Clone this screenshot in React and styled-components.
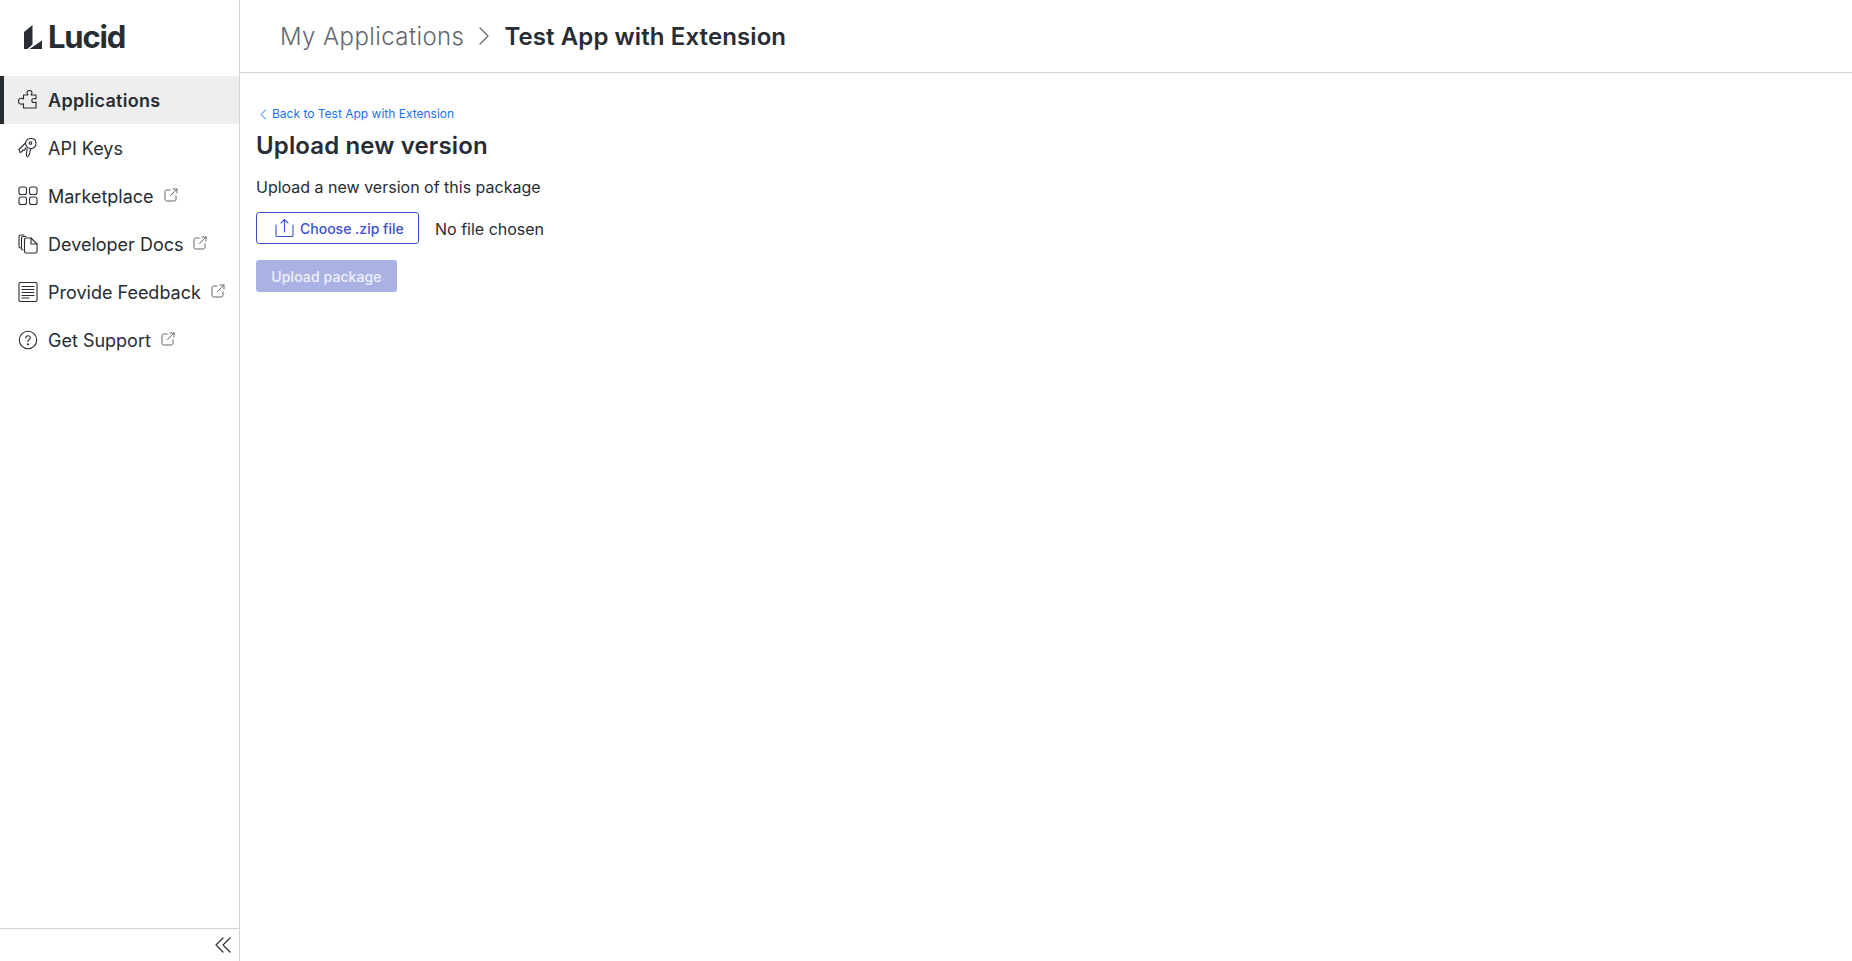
import styled, { createGlobalStyle } from 'styled-components';

const ink = '#282c33';

const GlobalStyle = createGlobalStyle`
  html, body {
    margin: 0;
    padding: 0;
    height: 100%;
    background: #fff;
    color: ${ink};
    font-family: Inter, "Noto Sans", sans-serif;
  }
  #root { height: 100%; }
  * { box-sizing: border-box; }
`;

const Glyph = ({ size = 20, children, ...rest }) => (
  <svg width={size} height={size} viewBox="0 0 20 20" fill="none" stroke="currentColor" strokeWidth="1.1" strokeLinecap="round" strokeLinejoin="round" {...rest}>
    {children}
  </svg>
);

const PuzzleIcon = () => (
  <Glyph>
    <path d="M5.5 5H9.500c.3 0 .4-.3.2-.6-.5-.5-.7-1-.7-1.600C9 1.400 10.200.5 11.500.5s2.500.9 2.500 2.300c0 .6-.2 1.100-.7 1.600-.2.3-.1.6.2.6H18v3.500c0 .3-.3.4-.6.3-.5-.2-1-.3-1.400-.3-1.300 0-2.200.8-2.200 2s.9 2 2.200 2c.4 0 .9-.1 1.400-.3.3-.1.6 0 .6.3V18H5.500v-4c0-.3-.3-.4-.6-.2-.5.3-1 .5-1.600.5C1.700 14.300.5 12.900.5 11.300S1.700 8.300 3.300 8.300c.6 0 1.100.2 1.600.5.3.2.6.1.6-.2z" />
  </Glyph>
);

const KeysIcon = () => (
  <Glyph>
    <path d="M7.500 5C8 2.500 10 .5 13 .5c3 0 5 2 5 5s-2 5-5 5c-2.500 0-5-2-5.500-5.500z" />
    <path d="M7.500 5 1 11.500l1.200 3 2-1 .5-1.500 1.800.3 1-2.300" />
    <path d="m13 10.500-1 2.500-.5 3.500-2 2.500-1.200-1.500.8-7.500" />
    <circle cx="12.500" cy="5" r="1.300" />
  </Glyph>
);

const GridIcon = () => (
  <Glyph>
    <rect x="1" y="1" width="7.500" height="7.500" rx="2" />
    <rect x="11.500" y="1" width="7.500" height="7.500" rx="2" />
    <rect x="1" y="11" width="7.500" height="7.500" rx="2" />
    <rect x="11.500" y="11" width="7.500" height="7.500" rx="2" />
  </Glyph>
);

const DocsIcon = () => (
  <Glyph>
    <path d="M2.500 14c-1 0-1.500-.5-1.500-1.500V2.500C1 1.500 1.500 1 2.500 1H6" />
    <path d="M5 16c-1 0-1.500-.5-1.500-1.500V4c0-1 .5-1.500 1.500-1.500h3" />
    <path d="M8 19c-1 0-1.500-.5-1.500-1.500v-12C6.500 4.500 7 4 8 4h5l6 6v7.500c0 1-.5 1.500-1.500 1.500z" />
    <path d="M13 4v6h6" />
  </Glyph>
);

const ListIcon = () => (
  <Glyph>
    <rect x="1" y=".5" width="18" height="19" rx="1.500" />
    <path d="M4 4.500h12M4 7.500h12M4 10.500h12M4 13.500h12M4 16h7" />
  </Glyph>
);

const HelpIcon = () => (
  <Glyph>
    <circle cx="10" cy="10" r="8.700" />
    <path d="M7.800 7.800c0-1.300 1-2.100 2.300-2.100s2.200.8 2.200 2c0 1.800-2.300 1.800-2.300 3.800" />
    <circle cx="10" cy="14.200" r=".5" fill="currentColor" />
  </Glyph>
);

const ExternalIcon = () => (
  <Glyph size={14} viewBox="0 0 14 14" strokeWidth="1" stroke="#62676e">
    <path d="M6 2H2.500C1.700 2 1 2.700 1 3.500v8C1 12.300 1.700 13 2.500 13h8c.8 0 1.500-.7 1.500-1.500V8" />
    <path d="M6.500 7.500 13 1M9 1h4v4" />
  </Glyph>
);

const navItems = [
  { label: 'Applications', Icon: PuzzleIcon, active: true },
  { label: 'API Keys', Icon: KeysIcon },
  { label: 'Marketplace', Icon: GridIcon, external: true },
  { label: 'Developer Docs', Icon: DocsIcon, external: true },
  { label: 'Provide Feedback', Icon: ListIcon, external: true },
  { label: 'Get Support', Icon: HelpIcon, external: true },
];

const App = () => {
  return (
    <Layout>
      <GlobalStyle />
      <Sidebar>
        <Logo>
          <svg width="18" height="24" viewBox="0 0 18 24" fill={ink}>
            <path d="M0 7 8.500 0v19.500L3.500 24H0z" />
            <path d="M18 15.500V24H5.500z" />
          </svg>
          <LogoText>Lucid</LogoText>
        </Logo>
        <Nav>
          {navItems.map(({ label, Icon, active, external }) => (
            <NavItem key={label} $active={active}>
              <NavIcon><Icon /></NavIcon>
              <span>{label}</span>
              {external && <ExternalMark><ExternalIcon /></ExternalMark>}
            </NavItem>
          ))}
        </Nav>
        <Collapse>
          <Glyph size={18} viewBox="0 0 18 18" strokeWidth="1.200">
            <path d="M9 2 2 9l7 7M16 2 9 9l7 7" />
          </Glyph>
        </Collapse>
      </Sidebar>
      <Main>
        <Header>
          <Crumb>My Applications</Crumb>
          <CrumbArrow>
            <Glyph size={24} viewBox="0 0 24 24" strokeWidth="1.200">
              <path d="m8 4 8 8-8 8" />
            </Glyph>
          </CrumbArrow>
          <CrumbCurrent>Test App with Extension</CrumbCurrent>
        </Header>
        <Content>
          <BackLink>
            <Glyph size={11} viewBox="0 0 11 11" strokeWidth="1">
              <path d="M7.500 1 3 5.500 7.500 10" />
            </Glyph>
            Back to Test App with Extension
          </BackLink>
          <Title>Upload new version</Title>
          <Description>Upload a new version of this package</Description>
          <FileRow>
            <ChooseButton>
              <Glyph>
                <path d="M1 7v10.500c0 .7.4 1 1 1h15c.6 0 1-.3 1-1V7" />
                <path d="M9.500 14V1.500M6 5l3.500-3.500L13 5" />
              </Glyph>
              Choose .zip file
            </ChooseButton>
            <FileName>No file chosen</FileName>
          </FileRow>
          <UploadButton disabled>Upload package</UploadButton>
        </Content>
      </Main>
    </Layout>
  );
};

export default App;

const Layout = styled.div`
  display: flex;
  height: 961px;
  overflow: hidden;
`;

const Sidebar = styled.aside`
  flex: 0 0 240px;
  display: flex;
  flex-direction: column;
  border-right: 1px solid #ced4db;
`;

const Logo = styled.div`
  height: 76px;
  display: flex;
  align-items: center;
  gap: 6px;
  padding: 0 0 3px 24px;
  color: ${ink};
`;

const LogoText = styled.span`
  font-size: 31px;
  font-weight: 700;
  letter-spacing: -1.2px;
`;

const Nav = styled.nav`
  flex: 1;
  display: flex;
  flex-direction: column;
`;

const NavItem = styled.a`
  height: 48px;
  display: flex;
  align-items: center;
  padding-left: ${p => (p.$active ? '14px' : '18px')};
  border-left: ${p => (p.$active ? `4px solid ${ink}` : 'none')};
  background: ${p => (p.$active ? '#eeeeee' : 'transparent')};
  font-size: 18px;
  font-weight: ${p => (p.$active ? 600 : 400)};
  letter-spacing: ${p => (p.$active ? '0.3px' : '0')};
  color: ${ink};
`;

const NavIcon = styled.span`
  display: flex;
  width: 30px;
`;

const ExternalMark = styled.span`
  display: flex;
  margin-left: 10px;
  margin-top: -2px;
`;

const Collapse = styled.div`
  height: 33px;
  display: flex;
  align-items: center;
  justify-content: flex-end;
  padding-right: 7px;
  border-top: 1px solid #ced4db;
`;

const Main = styled.main`
  flex: 1;
  display: flex;
  flex-direction: column;
`;

const Header = styled.header`
  height: 73px;
  display: flex;
  align-items: center;
  padding-left: 40px;
  border-bottom: 1px solid #ced4db;
`;

const Crumb = styled.span`
  font-size: 24px;
  font-weight: 300;
  letter-spacing: 0.4px;
  color: #62676e;
`;

const CrumbArrow = styled.span`
  display: flex;
  margin: 0 8px;
  color: #62676e;
`;

const CrumbCurrent = styled.span`
  font-size: 24px;
  font-weight: 600;
  letter-spacing: 0.1px;
`;

const Content = styled.div`
  display: flex;
  flex-direction: column;
  align-items: flex-start;
  padding: 33px 16px;
`;

const BackLink = styled.a`
  display: flex;
  align-items: center;
  gap: 3px;
  padding-left: 2px;
  font-size: 12px;
  line-height: 16px;
  color: #1a73e8;
`;

const Title = styled.h1`
  margin: 8px 0 0;
  font-size: 24px;
  line-height: 32px;
  font-weight: 600;
  letter-spacing: 0.13px;
`;

const Description = styled.p`
  margin: 13px 0 0;
  font-size: 16px;
  line-height: 24px;
`;

const FileRow = styled.div`
  display: flex;
  align-items: center;
  gap: 16px;
  margin-top: 13px;
`;

const ChooseButton = styled.button`
  width: 163px;
  height: 32px;
  display: flex;
  align-items: center;
  gap: 5px;
  padding: 0 0 0 18px;
  background: #fff;
  border: 1px solid #3d52cc;
  border-radius: 3px;
  color: #3d52cc;
  font-family: inherit;
  font-size: 14px;
  font-weight: 500;
`;

const FileName = styled.span`
  font-size: 16px;
  margin-top: 2px;
`;

const UploadButton = styled.button`
  width: 141px;
  height: 32px;
  margin-top: 16px;
  padding: 0;
  background: #aab2e4;
  border: none;
  border-radius: 3px;
  color: #eef0fa;
  font-family: inherit;
  font-size: 14px;
  font-weight: 500;
  letter-spacing: 0.1px;
`;
